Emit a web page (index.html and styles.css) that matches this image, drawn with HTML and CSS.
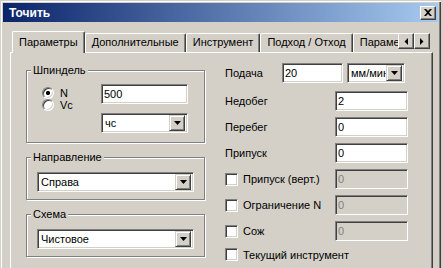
FILE: index.html
```html
<!DOCTYPE html>
<html lang="ru">
<head>
    <meta charset="UTF-8">
    <title>Точить</title>
    <link rel="stylesheet" href="styles.css">
</head>
<body>
    <div class="window">
        <div class="titlebar">
            <span class="title">Точить</span>
            <button class="close-btn">
                <svg width="8" height="7" viewBox="0 0 8 7"><path d="M0 0h2l2 2 2-2h2L5 3.5 8 7H6L4 5 2 7H0l3-3.5z" fill="#000"/></svg>
            </button>
        </div>

        <div class="tabbar">
            <div class="tabs">
                <div class="tab active">Параметры</div>
                <div class="tab">Дополнительные</div>
                <div class="tab">Инструмент</div>
                <div class="tab">Подход / Отход</div>
                <div class="tab">Параметры обработки</div>
            </div>
            <div class="tab-scroll">
                <button class="arrow-btn"><svg width="4" height="7" viewBox="0 0 4 7"><polygon points="4,0 4,7 0.5,3.5" fill="#000"/></svg></button>
                <button class="arrow-btn"><svg width="4" height="7" viewBox="0 0 4 7"><polygon points="0,0 0,7 3.5,3.5" fill="#000"/></svg></button>
            </div>
        </div>

        <div class="panel">
            <div class="left-col">
                <fieldset class="group group-spindle">
                    <legend>Шпиндель</legend>
                    <div class="spindle-body">
                        <div class="radios">
                            <label class="radio"><input type="radio" name="mode" checked>N</label>
                            <label class="radio"><input type="radio" name="mode">Vc</label>
                        </div>
                        <div class="spindle-fields">
                            <input class="field" type="text" value="500">
                            <div class="select">
                                <span class="select-value">чс</span>
                                <span class="drop-btn"><svg width="7" height="4" viewBox="0 0 7 4"><polygon points="0,0 7,0 3.5,4" fill="#000"/></svg></span>
                            </div>
                        </div>
                    </div>
                </fieldset>

                <fieldset class="group">
                    <legend>Направление</legend>
                    <div class="select wide">
                        <span class="select-value">Справа</span>
                        <span class="drop-btn"><svg width="7" height="4" viewBox="0 0 7 4"><polygon points="0,0 7,0 3.5,4" fill="#000"/></svg></span>
                    </div>
                </fieldset>

                <fieldset class="group">
                    <legend>Схема</legend>
                    <div class="select wide">
                        <span class="select-value">Чистовое</span>
                        <span class="drop-btn"><svg width="7" height="4" viewBox="0 0 7 4"><polygon points="0,0 7,0 3.5,4" fill="#000"/></svg></span>
                    </div>
                </fieldset>
            </div>

            <div class="right-col">
                <div class="row row-feed">
                    <span class="row-label short">Подача</span>
                    <input class="field feed" type="text" value="20">
                    <div class="select units">
                        <span class="select-value">мм/мин</span>
                        <span class="drop-btn"><svg width="7" height="4" viewBox="0 0 7 4"><polygon points="0,0 7,0 3.5,4" fill="#000"/></svg></span>
                    </div>
                </div>
                <div class="row">
                    <span class="row-label">Недобег</span>
                    <input class="field" type="text" value="2">
                </div>
                <div class="row">
                    <span class="row-label">Перебег</span>
                    <input class="field" type="text" value="0">
                </div>
                <div class="row">
                    <span class="row-label">Припуск</span>
                    <input class="field" type="text" value="0">
                </div>
                <div class="row">
                    <label class="row-label"><input type="checkbox">Припуск (верт.)</label>
                    <input class="field" type="text" value="0" disabled>
                </div>
                <div class="row">
                    <label class="row-label"><input type="checkbox">Ограничение N</label>
                    <input class="field" type="text" value="0" disabled>
                </div>
                <div class="row">
                    <label class="row-label"><input type="checkbox">Сож</label>
                    <input class="field" type="text" value="0" disabled>
                </div>
                <div class="row row-last">
                    <label class="row-label"><input type="checkbox">Текущий инструмент</label>
                </div>
            </div>
        </div>
    </div>
</body>
</html>
```

FILE: styles.css
```css
* {
    box-sizing: border-box;
}
body {
    margin: 0;
    background-color: #d4d0c8;
    font-family: "Liberation Sans", Arial, sans-serif;
    font-size: 11px;
    color: #000;
}
.window {
    width: 441px;
    height: 268px;
    padding: 3px 3px 0 3px;
    display: flex;
    flex-direction: column;
    overflow: hidden;
    box-shadow: inset 1px 1px #d4d0c8, inset 2px 2px #fff, inset -1px 0 #404040, inset -2px 0 #808080;
}

/* title bar */
.titlebar {
    height: 19px;
    flex-shrink: 0;
    display: flex;
    align-items: center;
    justify-content: space-between;
    padding: 0 2px 0 6px;
    background: linear-gradient(to right, #0a246a, #a6caf0);
    color: #fff;
    font-weight: bold;
    font-size: 12px;
}
.close-btn {
    width: 16px;
    height: 14px;
    padding: 0;
    display: flex;
    align-items: center;
    justify-content: center;
    background-color: #d4d0c8;
    border: 1px solid;
    border-color: #fff #404040 #404040 #fff;
    box-shadow: inset -1px -1px #808080;
}

/* tabs */
.tabbar {
    height: 21px;
    flex-shrink: 0;
    margin: 9px 5px 0 7px;
    display: flex;
    align-items: flex-end;
}
.tabs {
    flex: 1;
    min-width: 0;
    display: flex;
    align-items: flex-end;
    padding-left: 2px;
    overflow: hidden;
    height: 22px;
    margin-bottom: -1px;
}
.tab {
    flex-shrink: 0;
    height: 19px;
    margin-bottom: 1px;
    padding: 0 6px;
    line-height: 17px;
    white-space: nowrap;
    border-top: 1px solid #fff;
    border-left: 1px solid #fff;
    border-right: 1px solid #404040;
    border-radius: 2px 2px 0 0;
    box-shadow: inset -1px 0 #808080;
}
.tab.active {
    height: 22px;
    margin-bottom: 0;
    line-height: 20px;
    background-color: #d4d0c8;
    position: relative;
    z-index: 1;
}
.tab-scroll {
    align-self: flex-start;
    display: flex;
    margin: 2px 3px 0 0;
}
.arrow-btn {
    width: 16px;
    height: 16px;
    padding: 0;
    display: flex;
    align-items: center;
    justify-content: center;
    background-color: #d4d0c8;
    border: 1px solid;
    border-color: #fff #404040 #404040 #fff;
    box-shadow: inset -1px -1px #808080;
}

/* page */
.panel {
    flex: 1;
    margin: 0 5px 0 7px;
    padding: 10px 0 0 15px;
    display: flex;
    gap: 20px;
    border-top: 1px solid #fff;
    border-left: 1px solid #fff;
    border-right: 1px solid #404040;
    box-shadow: inset -1px 0 #808080;
}
.left-col {
    width: 179px;
    display: flex;
    flex-direction: column;
    gap: 7px;
}
.group {
    margin: 0;
    min-width: 0;
    padding: 8px 0 7px 0;
    border: 1px solid #808080;
    box-shadow: inset 1px 1px #fff, 1px 1px #fff;
}
.group legend {
    margin-left: 4px;
    padding: 0 2px;
    line-height: 14px;
    background-color: #d4d0c8;
}
.group-spindle {
    padding: 7px 0 9px 0;
}
.spindle-body {
    display: flex;
    padding-left: 15px;
}
.radios {
    width: 59px;
    padding-top: 3px;
    display: flex;
    flex-direction: column;
}
.radio {
    display: flex;
    align-items: center;
    height: 12px;
}
.spindle-fields {
    width: 87px;
    display: flex;
    flex-direction: column;
    gap: 9px;
}

/* controls */
input[type="radio"] {
    appearance: none;
    width: 12px;
    height: 12px;
    margin: 0 6px 0 0;
    border-radius: 50%;
    border: 1px solid;
    border-color: #808080 #fff #fff #808080;
    box-shadow: inset 1px 1px #404040, inset -1px -1px #d4d0c8;
    background-color: #fff;
}
input[type="radio"]:checked {
    background: radial-gradient(circle, #000 1.8px, #fff 2.4px);
}
input[type="checkbox"] {
    appearance: none;
    width: 13px;
    height: 13px;
    margin: 0 5px 0 0;
    border: 1px solid;
    border-color: #808080 #fff #fff #808080;
    box-shadow: inset 1px 1px #404040, inset -1px -1px #d4d0c8;
    background-color: #fff;
    flex-shrink: 0;
}
.field {
    width: 73px;
    height: 20px;
    padding: 0 2px;
    font: inherit;
    color: #000;
    background-color: #fff;
    border: 1px solid;
    border-color: #808080 #fff #fff #808080;
    box-shadow: inset 1px 1px #404040, inset -1px -1px #d4d0c8;
    outline: none;
}
.field:disabled {
    background-color: #d4d0c8;
    color: #808080;
}
.spindle-fields .field {
    width: 87px;
}
.select {
    height: 20px;
    display: flex;
    align-items: center;
    padding: 2px;
    background-color: #fff;
    border: 1px solid;
    border-color: #808080 #fff #fff #808080;
    box-shadow: inset 1px 1px #404040, inset -1px -1px #d4d0c8;
}
.select-value {
    flex: 1;
    min-width: 0;
    padding-left: 1px;
    white-space: nowrap;
    overflow: hidden;
}
.drop-btn {
    width: 16px;
    height: 16px;
    flex-shrink: 0;
    display: flex;
    align-items: center;
    justify-content: center;
    background-color: #d4d0c8;
    border: 1px solid;
    border-color: #d4d0c8 #404040 #404040 #d4d0c8;
    box-shadow: inset 1px 1px #fff, inset -1px -1px #808080;
}
.select.wide {
    width: 157px;
    margin-left: 10px;
}

/* right column */
.right-col {
    display: flex;
    flex-direction: column;
    gap: 6px;
}
.row {
    height: 20px;
    display: flex;
    align-items: center;
}
.row-feed {
    margin-bottom: 2px;
}
.row-last {
    height: 13px;
    margin-top: 1px;
}
.row-label {
    width: 110px;
    display: flex;
    align-items: center;
    white-space: nowrap;
}
.row-label.short {
    width: 57px;
}
.field.feed {
    width: 61px;
}
.select.units {
    width: 58px;
    margin-left: 4px;
}
```
